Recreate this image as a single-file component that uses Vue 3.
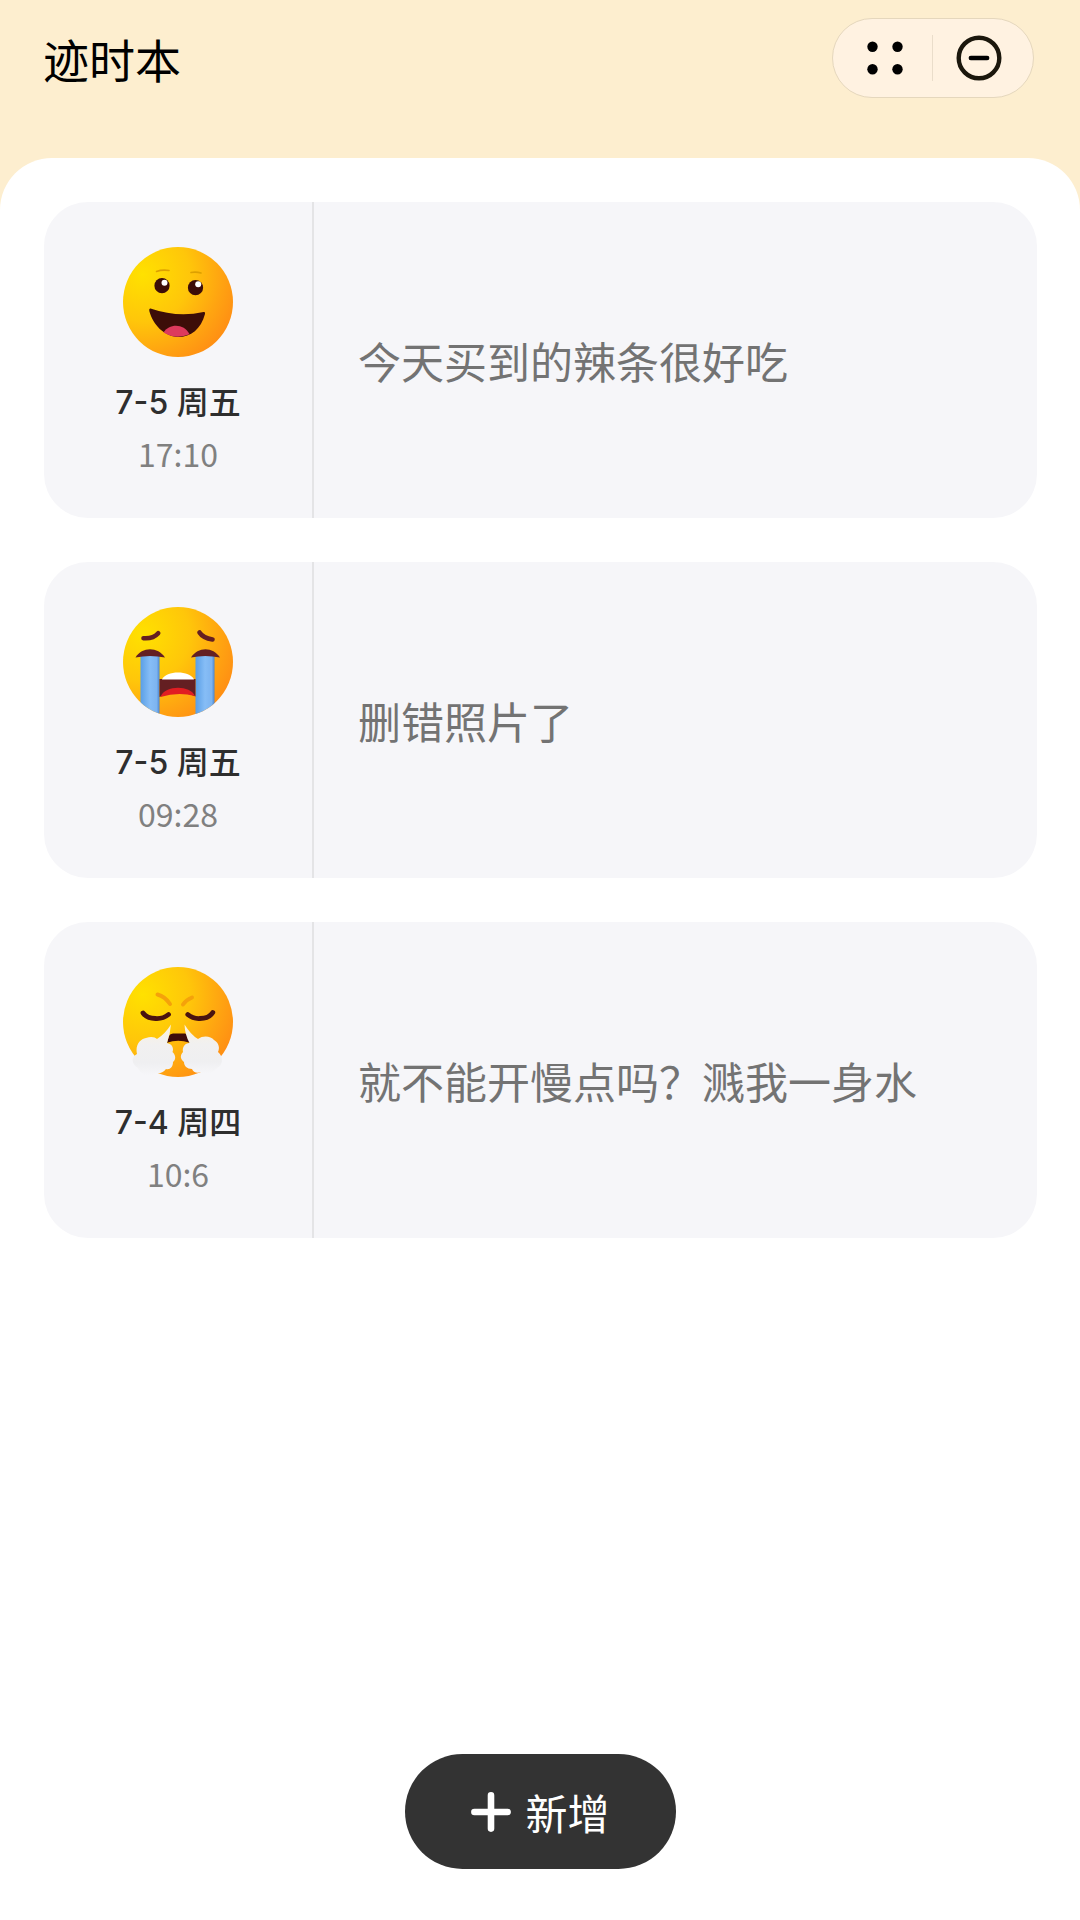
<script setup>
import { ref } from 'vue'

const records = ref([
  { id: 1, mood: 'happy', date: '7-5', week: '周五', time: '17:10', text: '今天买到的辣条很好吃' },
  { id: 2, mood: 'cry', date: '7-5', week: '周五', time: '09:28', text: '删错照片了' },
  { id: 3, mood: 'angry', date: '7-4', week: '周四', time: '10:6', text: '就不能开慢点吗？溅我一身水' }
])
</script>

<template>
  <div class="page">
    <header class="header">
      <h1 class="title">迹时本</h1>
      <div class="capsule">
        <button type="button" class="capsule-btn" aria-label="菜单">
          <svg width="44" height="44" viewBox="0 0 44 44">
            <circle cx="9.5" cy="10.7" r="5.2" />
            <circle cx="34.5" cy="10.7" r="5.2" />
            <circle cx="9.5" cy="33.3" r="5.2" />
            <circle cx="34.5" cy="33.3" r="5.2" />
          </svg>
        </button>
        <span class="capsule-line"></span>
        <button type="button" class="capsule-btn" aria-label="关闭">
          <svg width="46" height="46" viewBox="0 0 46 46" fill="none" stroke-linecap="round">
            <circle cx="23" cy="23" r="20.3" stroke="#1b170c" stroke-width="4.4" />
            <path d="M14.8 23h16.4" stroke="#000" stroke-width="4.4" />
          </svg>
        </button>
      </div>
    </header>

    <main class="panel">
      <ul class="list">
        <li v-for="item in records" :key="item.id" class="card">
          <div class="side">
            <!-- mood face -->
            <svg class="face" viewBox="0 0 110 110">
              <defs>
                <radialGradient :id="'skin' + item.id" cx="0.18" cy="0.25" r="0.95">
                  <stop offset="0" stop-color="#ffe100" />
                  <stop offset="0.45" stop-color="#ffc60a" />
                  <stop offset="0.75" stop-color="#ffa411" />
                  <stop offset="1" stop-color="#ff8a14" />
                </radialGradient>
                <linearGradient :id="'tear' + item.id">
                  <stop offset="0" stop-color="#5a9fe6" />
                  <stop offset="0.5" stop-color="#86bdf6" />
                  <stop offset="0.85" stop-color="#7db4f0" />
                  <stop offset="1" stop-color="#4a85cf" />
                </linearGradient>
                <linearGradient :id="'smoke' + item.id" x1="0" y1="0" x2="0" y2="1">
                  <stop offset="0" stop-color="#fbf3df" />
                  <stop offset="0.4" stop-color="#f1f0f0" />
                  <stop offset="0.75" stop-color="#efeff1" />
                  <stop offset="1" stop-color="#f6f6f9" />
                </linearGradient>
                <clipPath :id="'round' + item.id"><circle cx="55" cy="55" r="55" /></clipPath>
              </defs>
              <circle cx="55" cy="55" r="55" :fill="`url(#skin${item.id})`" />

              <g v-if="item.mood === 'happy'">
                <g fill="none" stroke="#dda000" stroke-width="1.6" stroke-linecap="round">
                  <path d="M33.5 24.5Q39 22.5 46 23.5" />
                  <path d="M68 25.5Q73 24.5 78 26" />
                </g>
                <g fill="#3d0d08">
                  <circle cx="39" cy="38.7" r="7.6" />
                  <circle cx="72.5" cy="40.7" r="7.6" />
                  <path d="M27.5 61.5Q55 71 80.5 65Q82.6 64.6 82 67C78 82 68 90 55 90C41 89 30 78 26.3 64Q25.8 61 27.5 61.5Z" />
                </g>
                <circle cx="41.5" cy="35.7" r="3" fill="#fff" />
                <circle cx="75.2" cy="37.2" r="3" fill="#fff" />
                <path d="M40.5 85.5C46 76.5 61 76 66.5 87.3Q53 93 40.5 85.5Z" fill="#dd3a5d" />
              </g>

              <g v-else-if="item.mood === 'cry'">
                <g :clip-path="`url(#round${item.id})`">
                  <rect x="17.5" y="47" width="19" height="63" :fill="`url(#tear${item.id})`" />
                  <rect x="72.5" y="47" width="19" height="63" :fill="`url(#tear${item.id})`" />
                </g>
                <g fill="none" stroke="#641f22" stroke-width="4.6" stroke-linecap="round">
                  <path d="M20.5 31.2Q30 32 35.2 26.2" />
                  <path d="M76.5 25.5Q80 31 89.5 32.5" />
                </g>
                <g fill="#641f22">
                  <path d="M12.5 50.5C19 39.5 35 39.5 42 50.5Q27 47.5 12.5 50.5Z" />
                  <path d="M68 50.5C75 39.5 90 39.5 97 50.5Q82 47.5 68 50.5Z" />
                  <path d="M36.5 72h36v17.5Q55 82 36.5 90Z" />
                </g>
                <path d="M39 72.5C43 63.2 67 63.2 71 72.5Z" fill="#fff" />
                <path d="M37.5 90C42 78 67 78 72 89Q55 84.5 37.5 90Z" fill="#e11d22" />
              </g>

              <g v-else>
                <g fill="none" stroke-linecap="round">
                  <g stroke="#f5a20a" stroke-width="4">
                    <path d="M34.5 27.5Q42 29.5 47 37" />
                    <path d="M69 30.5Q63 33 60 37.5" />
                  </g>
                  <g stroke="#4a1310" stroke-width="4.8">
                    <path d="M20 46Q24 51.5 32.5 51.5Q40 52 45.5 47.5" />
                    <path d="M64.8 47.5Q70 52 77 51.5Q86 51.5 89.8 45.5" />
                  </g>
                </g>
                <path d="M44 75.8L46 69Q47 66.5 50 66.5H62Q64.5 66.5 65.3 69L66.8 75.8Q55 71.5 44 75.8Z" fill="#3f0c0b" />
                <g :fill="`url(#smoke${item.id})`">
                  <path d="M48 57.5Q47 68 44 76C49 77 51 81 49.5 85C53 88 53 93 50 95C50 100 47 103 43 102C40 106 36 107 33 106C26 111 18 108 15 101C8 97 8 90 14 87C12 78 17 72 23 71C28 69 32 70 34 72Q42 67 48 57.5Z" />
                  <path d="M61.5 57.5Q68 68 75 72C80 68 88 69 91 73C96 76 97 81 95 85C101 90 100 98 94 101C89 107 82 108 78 105C74 107 70 105 69 102C64 102 61 99 61 95C57 92 57 88 60 85C59 80 62 76 66.5 76Q62 68 61.5 57.5Z" />
                </g>
              </g>
            </svg>
            <span class="date">{{ item.date }} {{ item.week }}</span>
            <span class="time">{{ item.time }}</span>
          </div>
          <p class="text">{{ item.text }}</p>
        </li>
      </ul>

      <button type="button" class="add">
        <svg width="40" height="40" viewBox="0 0 40 40" stroke="#fff" stroke-width="6.6" stroke-linecap="round">
          <path d="M20 3.4v33.2M3.4 20h33.2" />
        </svg>
        新增
      </button>
    </main>
  </div>
</template>

<style>
body {
  margin: 0;
}
</style>

<style scoped>
.page {
  min-height: 100vh;
  display: flex;
  flex-direction: column;
  background: #fdeecf;
  font-family: "Noto Sans CJK SC", sans-serif;
}
.header {
  height: 158px;
  padding: 18px 46px 0 43px;
  box-sizing: border-box;
  display: flex;
  align-items: flex-start;
  justify-content: space-between;
}
.title {
  margin: 0;
  font-size: 46px;
  font-weight: 400;
  line-height: 80px;
  color: #000;
}
.capsule {
  width: 202px;
  height: 80px;
  box-sizing: border-box;
  display: flex;
  align-items: center;
  border: 1px solid #e5d7bd;
  border-radius: 40px;
  background: #fff2e1;
}
.capsule-btn {
  flex: 1;
  display: flex;
  justify-content: center;
  border: 0;
  background: none;
}
.capsule-btn:first-child {
  padding: 0 0 0 6px;
}
.capsule-btn:last-child {
  padding: 0 8px 0 0;
}
.capsule-line {
  width: 1px;
  height: 46px;
  background: #eaddca;
}
.panel {
  flex: 1;
  display: flex;
  flex-direction: column;
  align-items: center;
  justify-content: space-between;
  padding: 44px 43px 51px 44px;
  border-radius: 52px 52px 0 0;
  background: #fff;
}
.list {
  width: 100%;
  margin: 0 0 44px;
  padding: 0;
  display: flex;
  flex-direction: column;
  gap: 44px;
  list-style: none;
}
.card {
  display: flex;
  min-height: 316px;
  border-radius: 44px;
  background: #f6f6f9;
}
.side {
  width: 268px;
  display: flex;
  flex-direction: column;
  align-items: center;
  padding-top: 45px;
  border-right: 2px solid #e4e4e6;
}
.face {
  width: 110px;
  height: 110px;
  margin-bottom: 20px;
}
.date,
.time {
  font-size: 32px;
}
.date {
  line-height: 52px;
  font-family: Inter, "Noto Sans CJK SC", sans-serif;
  font-weight: 500;
  color: #2e2e2e;
}
.time {
  line-height: 48px;
  color: #808080;
}
.text {
  flex: 1;
  align-self: center;
  margin: 0;
  padding: 0 44px;
  font-size: 43px;
  line-height: 60px;
  color: #737373;
}
.add {
  display: flex;
  align-items: center;
  justify-content: center;
  gap: 14px;
  width: 271px;
  height: 115px;
  padding: 0;
  border: 0;
  border-radius: 58px;
  background: #333;
  color: #fff;
  font-family: inherit;
  font-size: 42px;
}
</style>
